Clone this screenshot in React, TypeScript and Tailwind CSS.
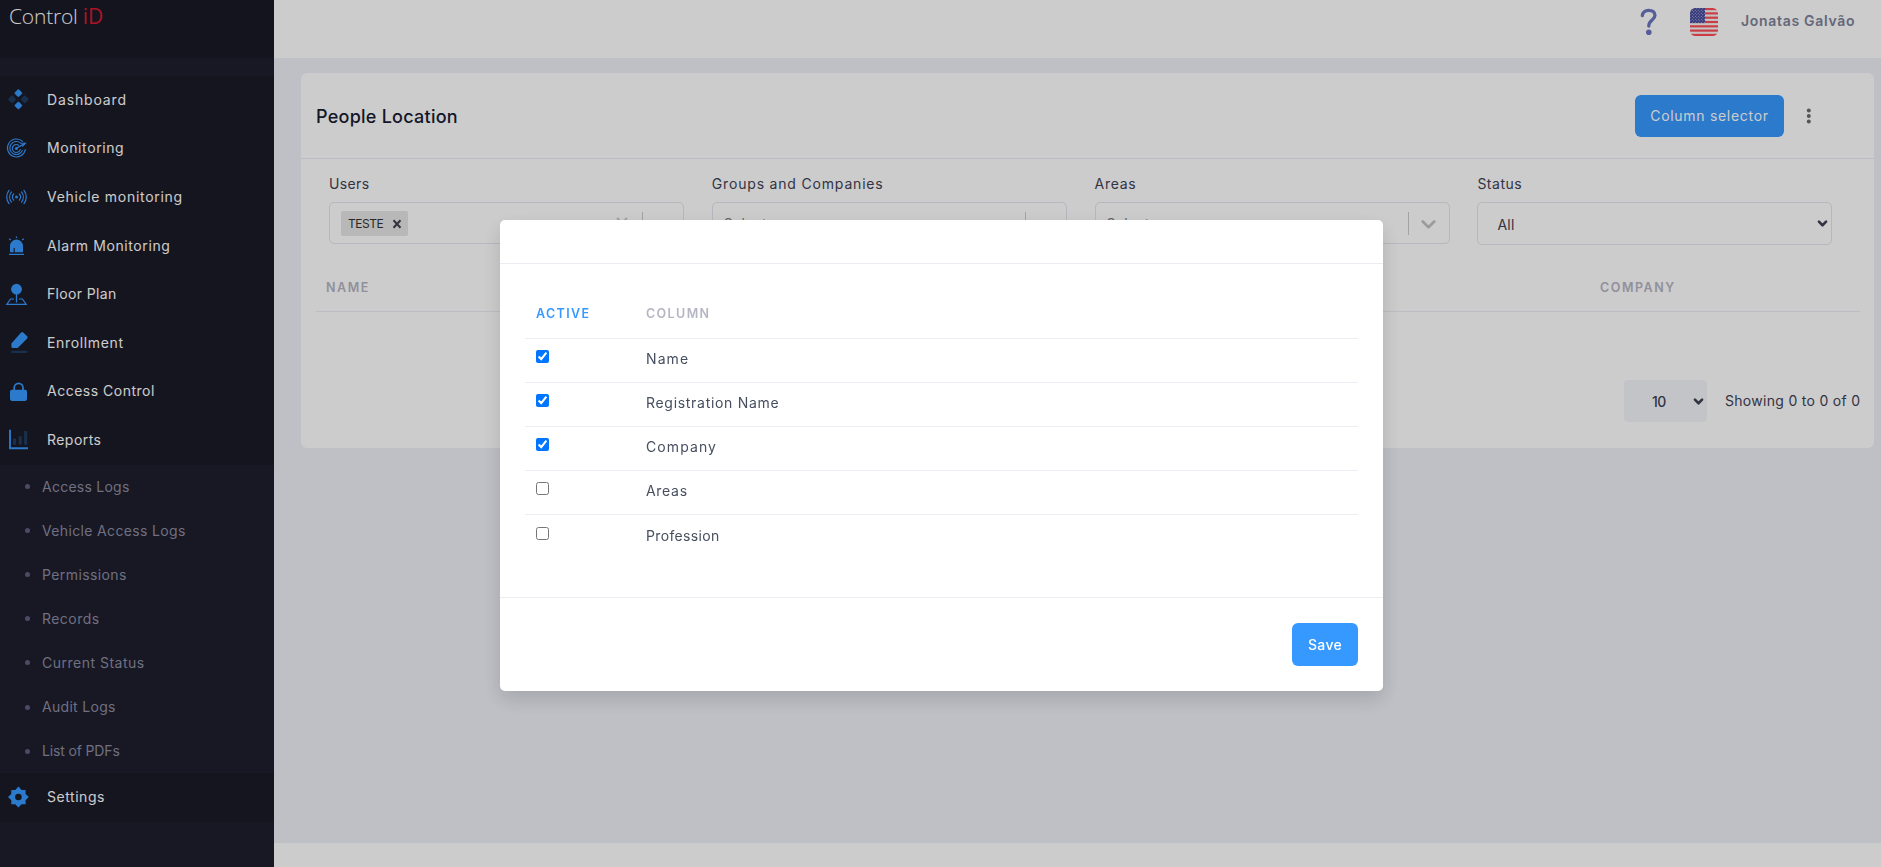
import type { ReactNode } from "react";

const BLUE = "#3699ff";
const DIM = "#203d5f";

function MenuIcon({ children }: { children: ReactNode }) {
  return (
    <svg width="40" height="48" viewBox="0 0 40 48" fill="none" className="shrink-0">
      {children}
    </svg>
  );
}

const icons: Record<string, ReactNode> = {
  dashboard: (
    <MenuIcon>
      <rect x="15.6" y="14.3" width="5.6" height="5.6" rx="1.2" transform="rotate(45 18.4 17.1)" fill={BLUE} stroke={BLUE} strokeWidth=".6" />
      <rect x="15.6" y="26.7" width="5.6" height="5.6" rx="1.2" transform="rotate(45 18.4 29.5)" fill={BLUE} stroke={BLUE} strokeWidth=".6" />
      <rect x="9.3" y="20.5" width="5.6" height="5.6" rx="1.2" transform="rotate(45 12.1 23.3)" fill={DIM} stroke={DIM} strokeWidth=".6" />
      <rect x="21.9" y="20.5" width="5.6" height="5.6" rx="1.2" transform="rotate(45 24.7 23.3)" fill={DIM} stroke={DIM} strokeWidth=".6" />
    </MenuIcon>
  ),
  monitoring: (
    <MenuIcon>
      <g stroke={BLUE} strokeWidth="1.1" strokeLinecap="round">
        <path d="M22.6 16.4A9 9 0 1 0 25.3 24.6" />
        <path d="M20.6 18.1A6.5 6.5 0 1 0 22.4 25.4" />
        <path d="M18.6 20.2A4 4 0 1 0 20.2 24.6" />
        <path d="M16.4 23.3L25 18.4" strokeWidth="1.3" />
        <path d="M21.4 18.2L25.4 18.3L22.6 21.2" />
      </g>
      <circle cx="16.4" cy="23.4" r="1.5" fill={BLUE} />
    </MenuIcon>
  ),
  vehicle: (
    <MenuIcon>
      <circle cx="16.5" cy="24" r="1.5" fill={BLUE} />
      <g stroke={BLUE} strokeWidth="1.2" strokeLinecap="round">
        <path d="M13.7 21a4.5 4.5 0 0 0 0 6M11.4 19a8 8 0 0 0 0 10M9 17.3a11 11 0 0 0 0 13.4" />
        <path d="M19.3 21a4.5 4.5 0 0 1 0 6M21.6 19a8 8 0 0 1 0 10M24 17.3a11 11 0 0 1 0 13.4" />
      </g>
    </MenuIcon>
  ),
  alarm: (
    <MenuIcon>
      <path d="M10 30.3V24a6.5 6.5 0 0 1 13 0v6.3h-8.3V26h-1.1v4.3z" fill={BLUE} />
      <path d="M9 32.3h15M16.5 14.4v1.7M9.2 16.8l1.6 1.3M23.8 16.8l-1.6 1.3" stroke={BLUE} strokeWidth="1.3" />
    </MenuIcon>
  ),
  floor: (
    <MenuIcon>
      <circle cx="16.5" cy="18.2" r="5.4" fill={BLUE} />
      <path d="M16.5 22v9.5" stroke={BLUE} strokeWidth="1.3" />
      <path d="M14 28h-3.4L6.8 33.4h19.4L22.4 28H19" stroke={BLUE} strokeWidth="1.2" />
    </MenuIcon>
  ),
  enrollment: (
    <MenuIcon>
      <path d="M11.4 24.6L20.9 13.7q1.2-1.1 2.3-.2l4 3.7q.9 1 0 2.2L17.7 29.1h-4.8q-1.5 0-1.5-1.4z" fill={BLUE} />
      <rect x="11.3" y="31.8" width="16" height="2.2" rx=".6" fill={DIM} />
    </MenuIcon>
  ),
  lock: (
    <MenuIcon>
      <rect x="10" y="21.7" width="17" height="11.2" rx="1.8" fill={BLUE} />
      <path d="M14.2 22v-2.2a4.4 4.4 0 0 1 8.8 0V22" stroke={BLUE} strokeWidth="1.7" />
    </MenuIcon>
  ),
  reports: (
    <MenuIcon>
      <path d="M10 13.8v18.4h18" stroke={BLUE} strokeWidth="1.9" />
      <rect x="13" y="22.4" width="3.1" height="6.4" rx=".7" fill={DIM} />
      <rect x="18.7" y="20.2" width="3.1" height="8.6" rx=".7" fill={DIM} />
      <rect x="24.1" y="15" width="3.1" height="13.8" rx=".7" fill={DIM} />
    </MenuIcon>
  ),
  settings: (
    <MenuIcon>
      <path
        d="M18.4 13.6L21.6 16.9H25.6V20.9L28.8 24L25.6 27.2V31.2H21.6L18.4 34.4L15.3 31.2H11.3V27.2L8 24L11.3 20.9V16.9H15.3ZM18.4 20.7a3.3 3.3 0 1 0 0 6.6a3.3 3.3 0 0 0 0-6.6Z"
        fill={BLUE}
        fillRule="evenodd"
      />
    </MenuIcon>
  ),
};

const menu: [string, string, string][] = [
  ["dashboard", "Dashboard", "tracking-[0.85px]"],
  ["monitoring", "Monitoring", "tracking-[0.6px]"],
  ["vehicle", "Vehicle monitoring", "tracking-[0.7px]"],
  ["alarm", "Alarm Monitoring", "tracking-[0.6px]"],
  ["floor", "Floor Plan", "tracking-[0.35px]"],
  ["enrollment", "Enrollment", "tracking-[0.65px]"],
  ["lock", "Access Control", "tracking-[0.5px]"],
  ["reports", "Reports", "tracking-[0.45px]"],
];

const reports: [string, string][] = [
  ["Access Logs", "tracking-[0.25px]"],
  ["Vehicle Access Logs", "tracking-[0.35px]"],
  ["Permissions", "tracking-[0.4px]"],
  ["Records", "tracking-[0.45px]"],
  ["Current Status", "tracking-[0.5px]"],
  ["Audit Logs", "tracking-[0.3px]"],
  ["List of PDFs", "tracking-[-0.15px]"],
];

function MenuItem({ icon, label, tracking }: { icon: string; label: string; tracking: string }) {
  return (
    <li className="flex h-[48.6px] items-center bg-[#1b1b28] text-[14px] text-white">
      {icons[icon]}
      <span className={`-mt-[2px] ml-[7px] ${tracking}`}>{label}</span>
    </li>
  );
}

function Sidebar() {
  return (
    <aside className="flex w-[274px] shrink-0 flex-col bg-[#1e1e2d]">
      <div className="h-[58px] bg-[#1a1a27] pl-[9px] pt-[3px] font-['Open_Sans',sans-serif] text-[21px] font-light leading-[26px] tracking-[-0.2px] text-white">
        Control <span className="font-normal text-[#d9182d]">iD</span>
      </div>
      <ul className="mt-[18px]">
        {menu.map(([icon, label, tracking]) => (
          <MenuItem key={label} icon={icon} label={label} tracking={tracking} />
        ))}
        <li>
          <ul>
            {reports.map(([label, tracking]) => (
              <li key={label} className="flex h-[44.05px] items-center pl-[25px] text-[14px] text-[#8c8ca2]">
                <span className="h-[5px] w-[5px] rounded-full bg-[#5c5e81]" />
                <span className={`-mt-px ml-[12px] ${tracking}`}>{label}</span>
              </li>
            ))}
          </ul>
        </li>
        <MenuItem icon="settings" label="Settings" tracking="tracking-[0.55px]" />
      </ul>
    </aside>
  );
}

function Flag() {
  return (
    <svg width="28" height="28" viewBox="0 0 28 28">
      <defs>
        <clipPath id="flag">
          <rect width="28" height="28" rx="5.5" />
        </clipPath>
        <pattern id="stars" width="3" height="3" patternUnits="userSpaceOnUse">
          <rect width="3" height="3" fill="#41479b" />
          <circle cx=".8" cy=".8" r=".5" fill="#d5d6ea" />
          <circle cx="2.3" cy="2.3" r=".5" fill="#d5d6ea" />
        </pattern>
      </defs>
      <g clipPath="url(#flag)">
        <rect width="28" height="28" fill="#f5f5f5" />
        {[0, 1, 2, 3, 4, 5, 6].map((i) => (
          <rect key={i} y={i * 4.31} width="28" height="2.15" fill="#ff4b55" />
        ))}
        <rect width="15" height="15.1" fill="url(#stars)" />
      </g>
    </svg>
  );
}

function Topbar() {
  return (
    <header className="flex h-[58px] shrink-0 items-start justify-end bg-white pr-[26px]">
      <svg width="18" height="28" viewBox="0 0 18 28" fill="none" className="mt-[8px]">
        <path d="M2.3 7.6C2.6 4.3 5.2 2.3 8.6 2.3C12.4 2.3 15 4.2 15 7.3C15 9.6 13.7 10.8 11.9 12.3C9.8 14 8.8 15 8.8 18" stroke="#6b76c0" strokeWidth="3.3" strokeLinecap="round" />
        <circle cx="8.8" cy="24.2" r="2.8" fill="#6b76c0" />
      </svg>
      <div className="ml-[32px] mt-[8px]">
        <Flag />
      </div>
      <div className="ml-[23px] mt-[10px] w-[114px] whitespace-nowrap text-[14px] font-semibold leading-[22px] tracking-[0.7px] text-[#7e8299]">
        Jonatas Galvão
      </div>
    </header>
  );
}

function Chevron({ size, color, stroke }: { size: number; color: string; stroke: number }) {
  return (
    <svg width={size} height={size} viewBox="0 0 20 20" fill="none" stroke={color} strokeWidth={stroke} strokeLinecap="round" strokeLinejoin="round">
      <path d="M4.5 7.2L10 12.7L15.5 7.2" />
    </svg>
  );
}

function Field({ label, tracking, box, children }: { label: string; tracking: string; box: string; children: ReactNode }) {
  return (
    <div className="w-[382.8px]">
      <div className={`mb-[7px] text-[14px] leading-[22px] text-[#3f4254] ${tracking}`}>{label}</div>
      <div className={`flex w-[355px] items-center rounded-[5px] border border-[#e4e6ef] ${box}`}>{children}</div>
    </div>
  );
}

function Indicators() {
  return (
    <>
      <span className="h-[23px] w-px bg-[#cccccc]" />
      <span className="flex w-[40px] justify-center pt-[3px]">
        <Chevron size={21} color="#c4c4c4" stroke={2.6} />
      </span>
    </>
  );
}

function Content() {
  return (
    <main className="flex-1 bg-[#eef0f8] pl-[27px] pr-[7px] pt-[15px]">
      <section className="h-[375px] rounded-[6px] bg-white">
        <div className="flex h-[86px] items-center border-b border-[#ebedf3] pl-[15px] pr-[55px]">
          <h1 className="pt-px text-[18px] font-medium tracking-[0.25px] text-[#181c32]">People Location</h1>
          <button className="ml-auto h-[42px] w-[149px] rounded-[6px] bg-[#3699ff] pb-px text-[14px] tracking-[0.7px] text-white">
            Column selector
          </button>
          <svg width="20" height="20" viewBox="0 0 20 20" fill="#6b6b6b" className="ml-[15px]">
            <circle cx="9.8" cy="4.6" r="2" />
            <circle cx="9.8" cy="10" r="2" />
            <circle cx="9.8" cy="15.4" r="2" />
          </svg>
        </div>
        <div className="flex h-[87px] pl-[28px] pt-[14px]">
          <Field label="Users" tracking="tracking-[0.35px]" box="h-[42px]">
            <span className="ml-[11px] flex h-[25px] w-[67px] items-center rounded-[2px] bg-[#e6e6e6] pl-[7px] pt-px text-[12px] tracking-[-0.45px] text-[#333333]">
              TESTE
              <svg width="10" height="10" viewBox="0 0 10 10" stroke="#3f4254" strokeWidth="2" className="ml-auto mr-[6px]">
                <path d="M1.5 1.2L8.5 8.8M8.5 1.2L1.5 8.8" />
              </svg>
            </span>
            <svg width="12" height="12" viewBox="0 0 12 12" stroke="#cccccc" strokeWidth="2.2" className="ml-auto mr-[14px]">
              <path d="M1 1L11 11M11 1L1 11" />
            </svg>
            <Indicators />
          </Field>
          <Field label="Groups and Companies" tracking="tracking-[0.82px]" box="h-[42px]">
            <span className="mr-auto pl-[11px] text-[14px] tracking-[0.3px] text-[#808080]">Select...</span>
            <Indicators />
          </Field>
          <Field label="Areas" tracking="tracking-[0.7px]" box="h-[42px]">
            <span className="mr-auto pl-[11px] text-[14px] tracking-[0.3px] text-[#808080]">Select...</span>
            <Indicators />
          </Field>
          <Field label="Status" tracking="tracking-[0.5px]" box="h-[43px]">
            <span className="pl-[19px] pt-px text-[14px] tracking-[0.3px] text-[#3f4254]">All</span>
            <span className="ml-auto mr-[2px]">
              <Chevron size={13} color="#3f4254" stroke={4} />
            </span>
          </Field>
        </div>
        <div className="ml-[15px] mr-[14px] flex h-[66px] items-center border-b border-[#ebedf3] pl-[10px] pt-[19px] text-[12.5px] font-semibold tracking-[1.55px] text-[#b5b5c3]">
          <span className="w-[1274px]">NAME</span>
          <span>COMPANY</span>
        </div>
        <div className="mt-[68px] flex items-center justify-end pr-[14px]">
          <span className="flex h-[42px] w-[83px] items-center rounded-[4px] bg-[#f3f6f9] pl-[28px] text-[14px] font-medium tracking-[-0.5px] text-[#3f4254]">
            10
            <span className="ml-auto mr-[2px]">
              <Chevron size={13} color="#3f4254" stroke={4} />
            </span>
          </span>
          <span className="ml-[18px] -mt-[2px] w-[135px] whitespace-nowrap text-[14px] tracking-[0.3px] text-[#3f4254]">Showing 0 to 0 of 0</span>
        </div>
      </section>
    </main>
  );
}

const columns: [string, boolean, string][] = [
  ["Name", true, "tracking-[1.1px]"],
  ["Registration Name", true, "tracking-[0.7px]"],
  ["Company", true, "tracking-[1.1px]"],
  ["Areas", false, "tracking-[0.7px]"],
  ["Profession", false, "tracking-[0.35px]"],
];

function ColumnModal() {
  return (
    <div className="fixed inset-0 flex items-start bg-black/20 pl-[500px] pt-[220px]">
      <div role="dialog" className="flex h-[471px] w-[883px] flex-col rounded-[5px] bg-white shadow-[0_8px_20px_rgba(0,0,0,0.14)]">
        <div className="h-[44px] border-b border-[#ebedf3]" />
        <div className="flex-1 px-[25px] pt-[25px]">
          <div className="flex h-[50px] items-center border-b border-[#ebedf3] pl-[11px] pt-[2px] text-[12.5px] font-semibold tracking-[1.4px]">
            <span className="w-[110px] text-[#3699ff]">ACTIVE</span>
            <span className="text-[#b5b5c3]">COLUMN</span>
          </div>
          {columns.map(([label, active, tracking]) => (
            <label key={label} className="group flex h-[44px] border-b border-[#ebedf3] pl-[11px] last:border-b-0 last:pt-px">
              <span className="w-[110px] pt-[11px]">
                <input type="checkbox" defaultChecked={active} className="block h-[13px] w-[13px]" />
              </span>
              <span className={`pt-[9px] text-[14px] leading-[22px] text-[#464e5f] ${tracking}`}>{label}</span>
            </label>
          ))}
        </div>
        <div className="flex h-[94px] items-center justify-end border-t border-[#ebedf3] pr-[25px]">
          <button className="h-[43px] w-[66px] rounded-[6px] bg-[#3699ff] pb-px text-[14px] font-medium tracking-[0.35px] text-white">Save</button>
        </div>
      </div>
    </div>
  );
}

export default function App() {
  return (
    <div className="flex h-[867px] w-[1881px] overflow-hidden bg-white font-[Inter,sans-serif]">
      <Sidebar />
      <div className="flex flex-1 flex-col">
        <Topbar />
        <Content />
        <footer className="h-[24px] shrink-0 bg-white" />
      </div>
      <ColumnModal />
    </div>
  );
}
